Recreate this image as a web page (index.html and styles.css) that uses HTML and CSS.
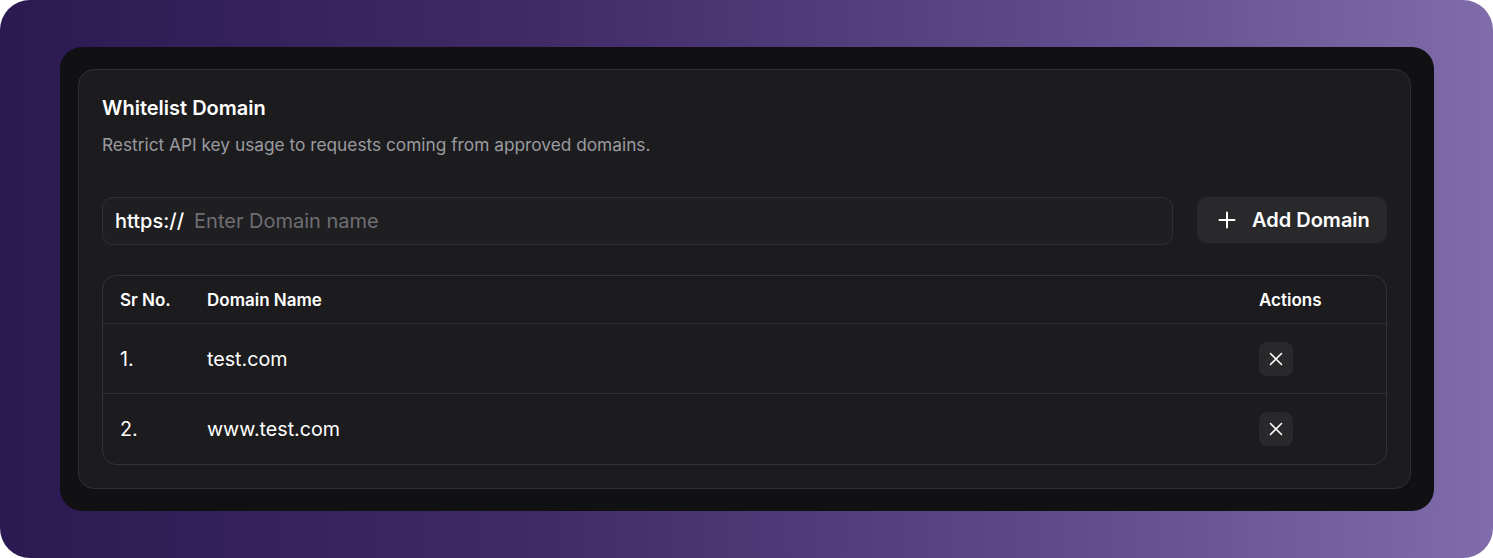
FILE: index.html
```html
<!DOCTYPE html>
<html>
<head>
<meta charset="utf-8">
<link rel="stylesheet" href="styles.css">
</head>
<body>
<div class="bg">
  <div class="frame">
    <div class="card">
      <h1 class="title">Whitelist Domain</h1>
      <p class="subtitle">Restrict API key usage to requests coming from approved domains.</p>
      <div class="input-row">
        <div class="input">
          <span class="prefix">https://</span>
          <span class="placeholder">Enter Domain name</span>
        </div>
        <button class="add-btn">
          <svg width="18" height="18" viewBox="0 0 18 18" fill="none" stroke="#fff" stroke-width="2" stroke-linecap="round"><path d="M9 1.5v15M1.5 9h15"/></svg>
          <span>Add Domain</span>
        </button>
      </div>
      <div class="table">
        <div class="row head">
          <div class="c-sr">Sr No.</div>
          <div class="c-name">Domain Name</div>
          <div class="c-act">Actions</div>
        </div>
        <div class="row">
          <div class="c-sr">1.</div>
          <div class="c-name">test.com</div>
          <div class="c-act"><span class="x-btn"><svg width="16" height="16" viewBox="0 0 16 16" fill="none" stroke="#fff" stroke-width="1.6" stroke-linecap="round"><path d="M2.5 2.5l11 11M13.5 2.5l-11 11"/></svg></span></div>
        </div>
        <div class="row">
          <div class="c-sr">2.</div>
          <div class="c-name">www.test.com</div>
          <div class="c-act"><span class="x-btn"><svg width="16" height="16" viewBox="0 0 16 16" fill="none" stroke="#fff" stroke-width="1.6" stroke-linecap="round"><path d="M2.5 2.5l11 11M13.5 2.5l-11 11"/></svg></span></div>
        </div>
      </div>
    </div>
  </div>
</div>
</body>
</html>
```
FILE: styles.css
```css
html, body {
  margin: 0;
  padding: 0;
  background: #ffffff;
}
body {
  font-family: Inter, "Noto Sans", sans-serif;
  color: #ffffff;
}
.bg {
  width: 1493px;
  height: 558px;
  box-sizing: border-box;
  border-radius: 30px;
  background: linear-gradient(90deg, #2b1a52 0%, #3f2a66 35%, #5e4a8a 70%, #806bab 100%);
  padding: 47px 59px 47px 60px;
}
.frame {
  height: 464px;
  box-sizing: border-box;
  background: #111113;
  border-radius: 22px;
  padding: 22px 23px 22px 18px;
}
.card {
  height: 420px;
  box-sizing: border-box;
  background: #1c1c1e;
  border: 1px solid #2f2f33;
  border-radius: 16px;
  padding: 26px 23px 24px 23px;
}
.title {
  margin: 0;
  font-size: 20px;
  line-height: 24px;
  font-weight: 600;
}
.subtitle {
  margin: 13px 0 0;
  font-size: 17.3px;
  line-height: 24px;
  color: #9b9ba0;
}
.input-row {
  display: flex;
  align-items: flex-start;
  gap: 24px;
  margin-top: 40px;
}
.input {
  flex: 1;
  height: 48px;
  box-sizing: border-box;
  border: 1px solid #2f2f33;
  border-radius: 10px;
  background: #1f1f22;
  display: flex;
  align-items: center;
  padding-left: 12px;
  font-size: 20px;
}
.prefix {
  color: #ffffff;
  font-weight: 500;
}
.placeholder {
  color: #6e6e74;
  margin-left: 10px;
}
.add-btn {
  width: 190px;
  height: 46px;
  border: none;
  border-radius: 10px;
  background: #29292c;
  color: #ffffff;
  font-family: inherit;
  font-size: 20px;
  font-weight: 600;
  display: flex;
  align-items: center;
  justify-content: flex-start;
  gap: 16px;
  padding: 0 0 0 21px;
}
.table {
  margin-top: 30px;
  border: 1px solid #333337;
  border-radius: 14px;
  overflow: hidden;
}
.row {
  display: flex;
  align-items: center;
  height: 69px;
  font-size: 19.7px;
  border-top: 1px solid #2f2f33;
}
.row:last-child {
  height: 70px;
}
.row.head {
  height: 47px;
  border-top: none;
  font-size: 17px;
  font-weight: 600;
}
.c-sr {
  width: 87px;
  padding-left: 17px;
}
.c-name {
  flex: 1;
}
.c-act {
  width: 127px;
}
.x-btn {
  width: 34px;
  height: 34px;
  border-radius: 8px;
  background: #29292c;
  display: flex;
  align-items: center;
  justify-content: center;
}
```
